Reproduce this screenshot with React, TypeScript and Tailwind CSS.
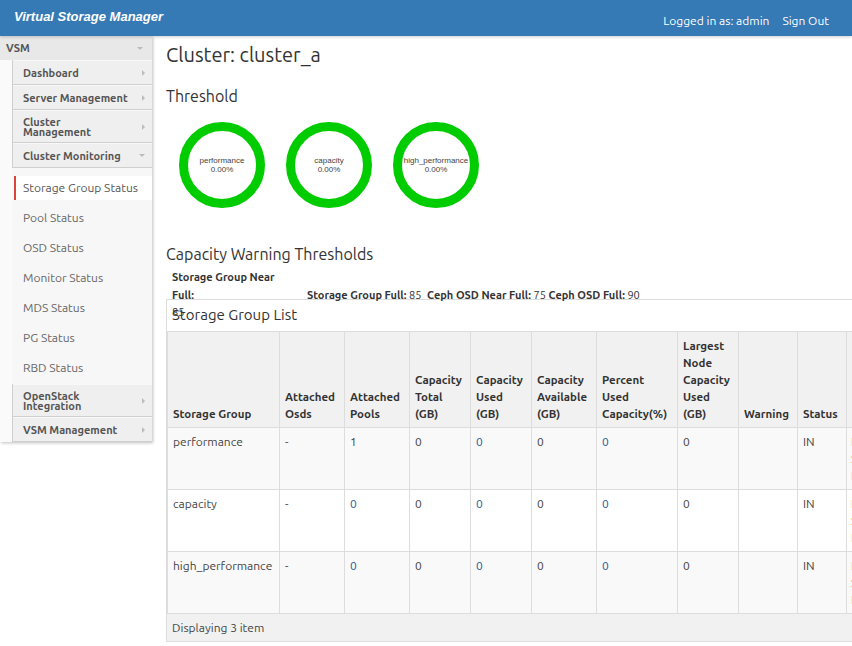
import React from "react";

const font = { fontFamily: "Ubuntu, 'Open Sans', 'Noto Sans', sans-serif" };

function Caret({ down }: { down?: boolean }) {
  return down ? (
    <span className="w-0 h-0 border-l-[3px] border-r-[3px] border-t-[3px] border-l-transparent border-r-transparent border-t-[#bbb]" />
  ) : (
    <span className="w-0 h-0 border-t-[3px] border-b-[3px] border-l-[3px] border-t-transparent border-b-transparent border-l-[#bbb]" />
  );
}

function MenuItem({ label, down, tall }: { label: string; down?: boolean; tall?: boolean }) {
  return (
    <div
      className={`flex items-center justify-between pl-[10px] pr-[7px] bg-[#efefef] border-b border-[#cfcfcf] border-t border-t-[#f8f8f8] ${
        tall ? "h-[33px]" : "h-[25px]"
      }`}
    >
      <span className="text-[11px] font-bold text-[#555] leading-[10px] whitespace-pre-line">{label}</span>
      <Caret down={down} />
    </div>
  );
}

const subItems = ["Storage Group Status", "Pool Status", "OSD Status", "Monitor Status", "MDS Status", "PG Status", "RBD Status"];

function Sidebar() {
  return (
    <div className="w-[152px] shrink-0 self-start bg-[#fafafa] shadow-[1px_1px_3px_rgba(0,0,0,0.25)]">
      <div className="h-[24px] bg-[#e8e8e8] flex items-center justify-between pl-[6px] pr-[9px]">
        <span className="text-[11px] font-bold text-[#555]">VSM</span>
        <Caret down />
      </div>
      <div className="ml-[12px] border-l border-[#cfcfcf]">
        <MenuItem label="Dashboard" />
        <MenuItem label="Server Management" />
        <MenuItem label={"Cluster\nManagement"} tall />
        <MenuItem label="Cluster Monitoring" down />
        <div className="bg-[#f7f7f7] pt-[5px] pb-px -ml-px pl-[2px]">
          {subItems.map((s, i) => (
            <div key={s} className="h-[30px] py-[3px]">
              <div
                className={`h-[24px] flex items-center text-[12px] ${
                  i === 0 ? "bg-white border-l-2 border-[#d9463c] pl-[7px] text-[#555]" : "pl-[9px] text-[#666]"
                }`}
              >
                {s}
              </div>
            </div>
          ))}
        </div>
        <MenuItem label={"OpenStack\nIntegration"} tall />
        <MenuItem label="VSM Management" />
      </div>
    </div>
  );
}

function Donut({ name }: { name: string }) {
  return (
    <div
      className="w-[86px] h-[86px] rounded-full border-[9px] border-[#00cc00] flex flex-col items-center justify-center text-[8px] leading-[9px] text-[#444]"
      style={{ fontFamily: "'Liberation Sans', Arial, sans-serif" }}
    >
      <span>{name}</span>
      <span>0.00%</span>
    </div>
  );
}

const cols = [112, 65, 65, 61, 61, 65, 81, 61, 59, 49, 60];
const heads = [
  "Storage Group",
  "Attached Osds",
  "Attached Pools",
  "Capacity Total (GB)",
  "Capacity Used (GB)",
  "Capacity Available (GB)",
  "Percent Used Capacity(%)",
  "Largest Node Capacity Used (GB)",
  "Warning",
  "Status",
  "",
];

type Cell = { v: string; link?: boolean };
const rows: Cell[][] = [
  [{ v: "performance" }, { v: "-" }, { v: "1" }, { v: "0" }, { v: "0", link: true }, { v: "0" }, { v: "0", link: true }, { v: "0" }, { v: "" }, { v: "IN" }],
  [{ v: "capacity" }, { v: "-" }, { v: "0", link: true }, { v: "0" }, { v: "0", link: true }, { v: "0" }, { v: "0", link: true }, { v: "0" }, { v: "" }, { v: "IN" }],
  [{ v: "high_performance" }, { v: "-" }, { v: "0", link: true }, { v: "0" }, { v: "0", link: true }, { v: "0" }, { v: "0", link: true }, { v: "0" }, { v: "" }, { v: "IN" }],
];

function StorageTable() {
  return (
    <div className="border border-[#ddd] w-[740px]">
      <div className="h-[31px] flex items-center px-[5px] text-[15px] text-[#333]">Storage Group List</div>
      <table className="table-fixed border-collapse w-[739px] text-[12px]">
        <colgroup>
          {cols.map((w, i) => (
            <col key={i} style={{ width: w }} />
          ))}
        </colgroup>
        <thead>
          <tr className="h-[96px] bg-[#f1f1f1]">
            {heads.map((h, i) => (
              <th
                key={i}
                className="border border-[#ddd] align-bottom text-left font-bold text-[11.5px] leading-[17px] text-[#333] px-[5px] pb-[5px]"
              >
                {h}
              </th>
            ))}
          </tr>
        </thead>
        <tbody>
          {rows.map((r, ri) => (
            <tr key={ri} className={`h-[62px] ${ri % 2 === 0 ? "bg-[#f9f9f9]" : "bg-white"}`}>
              {r.map((c, ci) => (
                <td
                  key={ci}
                  className={`border border-[#ddd] align-top px-[5px] pt-[5px] leading-[17px] ${
                    c.link ? "text-[#2a5a9a]" : "text-[#444]"
                  }`}
                >
                  {c.v}
                </td>
              ))}
              <td className="border border-[#ddd] align-top px-[4px] pt-[5px] leading-[17px] text-[#e0a030]">
                <div>Edit</div>
                <div>Show</div>
                <div>List</div>
              </td>
            </tr>
          ))}
        </tbody>
      </table>
      <div className="h-[27px] bg-[#f1f1f1] flex items-center px-[5px] text-[12px] text-[#444]">Displaying 3 item</div>
    </div>
  );
}

export default function App() {
  return (
    <div className="w-[852px] h-[646px] overflow-hidden bg-white" style={font}>
      <div className="h-[36px] bg-[#3579b5] flex items-center justify-between pl-[14px] pr-[23px] shadow-[0_1px_3px_rgba(0,0,0,0.2)] relative z-10">
        <span
          className="text-white italic font-bold text-[13px] -mt-[3px]"
          style={{ fontFamily: "'Liberation Sans', Arial, sans-serif" }}
        >
          Virtual Storage Manager
        </span>
        <div className="flex gap-[13px] text-white text-[12px] mt-[6px]">
          <span>Logged in as: admin</span>
          <span>Sign Out</span>
        </div>
      </div>
      <div className="flex">
        <Sidebar />
        <div className="pl-[14px] flex-1 min-w-0">
          <h1 className="text-[20px] text-[#333] mt-[7px] leading-[24px]">Cluster: cluster_a</h1>
          <h2 className="text-[16px] text-[#333] mt-[19px] leading-[20px]">Threshold</h2>
          <div className="flex gap-[21px] pl-[13px] mt-[16px]">
            <Donut name="performance" />
            <Donut name="capacity" />
            <Donut name="high_performance" />
          </div>
          <h2 className="text-[16px] text-[#333] mt-[36px] leading-[20px]">Capacity Warning Thresholds</h2>
          <div className="flex h-[30px] mt-[5px] pl-[6px] text-[11px] leading-[17.5px] text-[#333]">
            <div className="w-[135px] shrink-0">
              <b>Storage Group Near</b>
              <br />
              <b>Full:</b>
              <br />
              85
            </div>
            <div className="pt-[17.5px] whitespace-nowrap">
              <b>Storage Group Full:</b> 85 <b className="ml-[3px]">Ceph OSD Near Full:</b> 75 <b>Ceph OSD Full:</b> 90
            </div>
          </div>
          <StorageTable />
        </div>
      </div>
    </div>
  );
}
